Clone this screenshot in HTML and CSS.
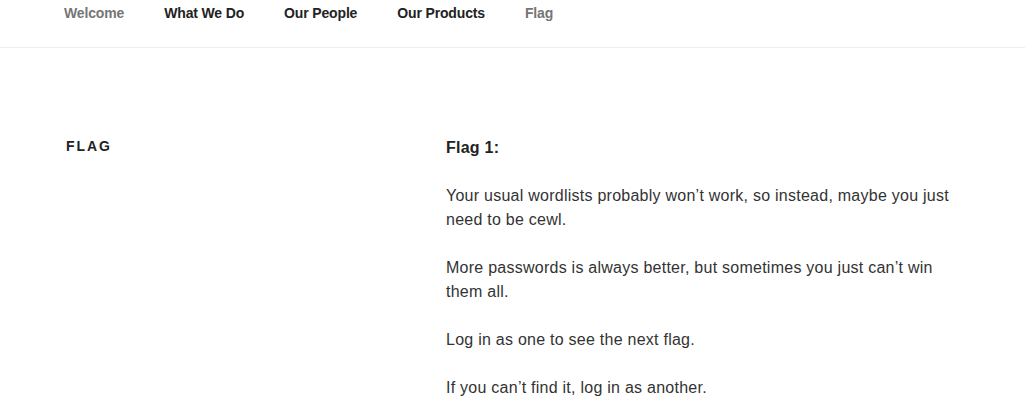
FILE: index.html
```html
<!DOCTYPE html>
<html lang="en">
<head>
    <meta charset="UTF-8">
    <meta name="viewport" content="width=device-width, initial-scale=1.0">
    <title>Flag</title>
    <link rel="stylesheet" href="styles.css">
</head>
<body>
    <nav class="menu">
        <a href="#" class="item muted">Welcome</a>
        <a href="#" class="item">What We Do</a>
        <a href="#" class="item">Our People</a>
        <a href="#" class="item">Our Products</a>
        <a href="#" class="item muted">Flag</a>
    </nav>

    <div class="page">
        <header class="page-header">
            <h2 class="page-title">Flag</h2>
        </header>
        <div class="entry">
            <p><strong>Flag 1:</strong></p>
            <p>Your usual wordlists probably won&rsquo;t work, so instead, maybe you just need to be cewl.</p>
            <p>More passwords is always better, but sometimes you just can&rsquo;t win them all.</p>
            <p>Log in as one to see the next flag.</p>
            <p>If you can&rsquo;t find it, log in as another.</p>
        </div>
    </div>
</body>
</html>
```

FILE: styles.css
```css
body {
    margin: 0;
    background-color: #fff;
    color: #333;
    font-family: "Liberation Sans", Arial, sans-serif;
    font-size: 16px;
    line-height: 1.5;
}

.menu {
    display: flex;
    gap: 40px;
    padding: 2px 0 0 64px;
    height: 45px;
    border-bottom: 1px solid #eee;
}
.item {
    font-size: 14px;
    font-weight: 700;
    line-height: 22px;
    letter-spacing: -0.15px;
    color: #222;
    text-decoration: none;
}
.muted {
    color: #767676;
}

.page {
    display: grid;
    grid-template-columns: 382px 520px;
    padding: 86px 0 0 64px;
}
.page-title {
    margin: 0;
    padding-left: 2px;
    font-size: 14px;
    font-weight: 800;
    letter-spacing: 0.14em;
    text-transform: uppercase;
    color: #222;
    line-height: 24px;
}
.entry {
    padding-top: 2px;
    letter-spacing: 0.25px;
}
.entry p {
    margin: 0 0 24px 0;
}
.entry strong {
    color: #222;
}
```
